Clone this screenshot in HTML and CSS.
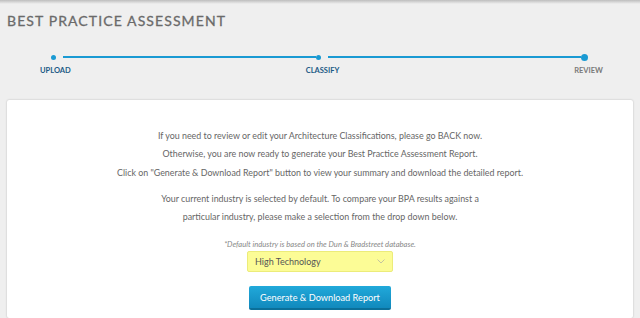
FILE: index.html
```html
<!DOCTYPE html>
<html>
<head>
	<title>Best Practice Assessment</title>
	<link rel="stylesheet" href="styles.css">
</head>
<body>
	<div class="topbar"></div>
	<header class="page-head">
		<h1 class="page-title">BEST PRACTICE ASSESSMENT</h1>
	</header>

	<!-- wizard steps -->
	<div class="stepper">
		<div class="track">
			<span class="dot"></span>
			<span class="line"></span>
			<span class="dot"></span>
			<span class="line"></span>
			<span class="dot dot-current"></span>
		</div>
		<div class="labels">
			<span class="step-label done">UPLOAD</span>
			<span class="step-label done">CLASSIFY</span>
			<span class="step-label">REVIEW</span>
		</div>
	</div>

	<main class="card">
		<p class="info">If you need to review or edit your Architecture Classifications, please go BACK now.<br>
		Otherwise, you are now ready to generate your Best Practice Assessment Report.<br>
		Click on "Generate &amp; Download Report" button to view your summary and download the detailed report.</p>

		<p class="info">Your current industry is selected by default. To compare your BPA results against a<br>
		particular industry, please make a selection from the drop down below.</p>

		<p class="note">*Default industry is based on the Dun &amp; Bradstreet database.</p>

		<div class="select">
			<span>High Technology</span>
			<svg class="chevron" width="8" height="5" viewBox="0 0 8 5"><path d="M0.5 0.5 L4 4 L7.5 0.5" fill="none" stroke="#c4c4a0" stroke-width="1"/></svg>
		</div>

		<button class="report-btn">Generate &amp; Download Report</button>
	</main>
</body>
</html>
```

FILE: styles.css
```css
* {
	margin: 0;
	padding: 0;
	box-sizing: border-box;
}

body {
	background-color: #efefef;
	font-family: 'Lato', 'Liberation Sans', sans-serif;
	color: #666;
	height: 318px;
	overflow: hidden;
}

.topbar {
	height: 4px;
	background: linear-gradient(#bdbdbd, #efefef);
}

.page-head {
	padding: 8px 7px 0 7px;
}

.page-title {
	font-size: 14px;
	font-weight: 400;
	letter-spacing: 1.1px;
	color: #6a6a6a;
	line-height: 18px;
	-webkit-text-stroke: 0.3px #6a6a6a;
}

.stepper {
	margin-top: 23px;
	padding: 0 37px 0 40px;
}

.track {
	display: flex;
	align-items: center;
	padding: 0 15px 0 11px;
	height: 8px;
}

.dot {
	width: 5px;
	height: 5px;
	border-radius: 50%;
	background-color: #1a9ad3;
	flex-shrink: 0;
}

.dot-current {
	width: 7px;
	height: 7px;
}

.line {
	flex: 1;
	height: 2px;
	margin-left: 7px;
	background-color: #1a9ad3;
}

.labels {
	display: flex;
	justify-content: space-between;
	margin-top: 5px;
}

.step-label {
	font-size: 7.5px;
	font-weight: 700;
	color: #7a7a7a;
}

.step-label.done {
	color: #1b5a86;
}

.card {
	margin: 25px 7px 0 7px;
	background-color: #fff;
	box-shadow: 0 0 2px rgba(0, 0, 0, 0.25);
	border-radius: 2px;
	height: 218px;
	padding-top: 27px;
	display: flex;
	flex-direction: column;
	align-items: center;
}

.info {
	font-size: 8.9px;
	line-height: 18.3px;
	text-align: center;
	color: #666;
	margin-bottom: 8px;
}

.note {
	font-size: 7.6px;
	font-style: italic;
	color: #888;
	margin-top: 5px;
}

.select {
	width: 146px;
	height: 21px;
	margin-top: 2px;
	background-color: #fcfc96;
	border: 1px solid #ecec7a;
	border-radius: 2px;
	display: flex;
	align-items: center;
	justify-content: space-between;
	padding: 0 7px 0 7px;
	font-size: 9px;
	color: #555;
}

.report-btn {
	margin-top: 14px;
	width: 142px;
	height: 24px;
	border: none;
	border-bottom: 2px solid #0b6f99;
	border-radius: 2px;
	background: linear-gradient(#21a9da, #1189bd);
	color: #fff;
	font-family: 'Lato', 'Liberation Sans', sans-serif;
	font-size: 9.2px;
	cursor: pointer;
}
```
